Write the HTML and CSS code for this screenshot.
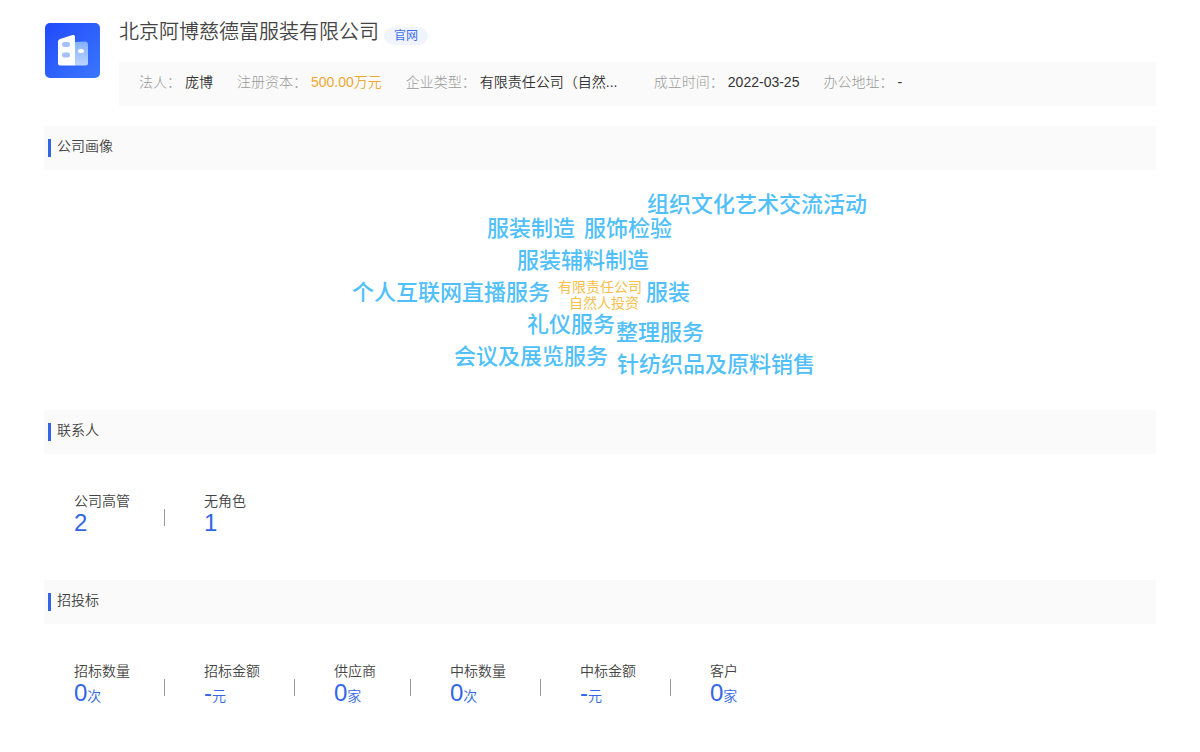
FILE: index.html
```html
<!DOCTYPE html>
<html lang="zh-CN">
<head>
<meta charset="utf-8">
<title>北京阿博慈德富服装有限公司</title>
<link rel="stylesheet" href="styles.css">
</head>
<body>
<main class="page">
  <header class="company">
    <svg class="logo" viewBox="0 0 55 55" aria-hidden="true">
      <defs>
        <linearGradient id="tile" x1="0" y1="0" x2="1" y2="1">
          <stop offset="0" stop-color="#2149fb"/>
          <stop offset="1" stop-color="#3a78fd"/>
        </linearGradient>
        <linearGradient id="wing" x1="0" y1="0" x2="0" y2="1">
          <stop offset="0" stop-color="#84b0fb"/>
          <stop offset="1" stop-color="#bad4fc"/>
        </linearGradient>
      </defs>
      <rect width="55" height="55" rx="5" fill="url(#tile)"/>
      <path d="M30 19 L40.500 18.500 Q43 19 43 21.500 V40 Q43 42.500 40.500 42.500 H30 Z" fill="url(#wing)"/>
      <path d="M15 16 Q13 16.500 13 19 V40.500 Q13 42.500 15 42.500 H30 V13.500 Q30 11.500 27.500 12 Z" fill="#fdfeff"/>
      <rect x="17" y="19" width="8" height="5" rx="2.500" fill="#a3c0f8"/>
      <rect x="17" y="29.500" width="8" height="5" rx="2.500" fill="#a3c0f8"/>
      <rect x="33" y="26" width="6" height="4" rx="2" fill="#fff"/>
    </svg>
    <div class="company-main">
      <div class="title-row">
        <h1 class="name">北京阿博慈德富服装有限公司</h1>
        <a class="site" href="#">官网</a>
      </div>
      <dl class="facts">
        <div class="fact"><dt>法人：</dt><dd>庞博</dd></div>
        <div class="fact"><dt>注册资本：</dt><dd class="money">500.00万元</dd></div>
        <div class="fact"><dt>企业类型：</dt><dd class="kind">有限责任公司（自然...</dd></div>
        <div class="fact"><dt>成立时间：</dt><dd>2022-03-25</dd></div>
        <div class="fact"><dt>办公地址：</dt><dd>-</dd></div>
      </dl>
    </div>
  </header>

  <section>
    <h2 class="heading">公司画像</h2>
    <div class="cloud">
      <span class="word w1">组织文化艺术交流活动</span>
      <span class="word w2">服装制造</span>
      <span class="word w3">服饰检验</span>
      <span class="word w4">服装辅料制造</span>
      <span class="word w5">个人互联网直播服务</span>
      <span class="word small w6">有限责任公司</span>
      <span class="word small w7">自然人投资</span>
      <span class="word w8">服装</span>
      <span class="word w9">礼仪服务</span>
      <span class="word w10">整理服务</span>
      <span class="word w11">会议及展览服务</span>
      <span class="word w12">针纺织品及原料销售</span>
    </div>
  </section>

  <section>
    <h2 class="heading">联系人</h2>
    <dl class="stats">
      <div class="stat"><dt>公司高管</dt><dd>2</dd></div>
      <div class="stat"><dt>无角色</dt><dd>1</dd></div>
    </dl>
  </section>

  <section>
    <h2 class="heading">招投标</h2>
    <dl class="stats">
      <div class="stat"><dt>招标数量</dt><dd>0<small>次</small></dd></div>
      <div class="stat"><dt>招标金额</dt><dd>-<small>元</small></dd></div>
      <div class="stat"><dt>供应商</dt><dd>0<small>家</small></dd></div>
      <div class="stat"><dt>中标数量</dt><dd>0<small>次</small></dd></div>
      <div class="stat"><dt>中标金额</dt><dd>-<small>元</small></dd></div>
      <div class="stat"><dt>客户</dt><dd>0<small>家</small></dd></div>
    </dl>
  </section>
</main>
</body>
</html>
```
FILE: styles.css
```css
* {
  box-sizing: border-box;
}

body {
  margin: 0;
  background: #fff;
  color: #444;
  font: 350 14px/20px "Liberation Sans", "Noto Sans CJK SC", sans-serif;
}

h1, h2, dl, dd {
  margin: 0;
  font-weight: 350;
}

.page {
  padding: 18px 44px 0;
}

.company {
  display: flex;
  gap: 19px;
  margin-bottom: 20px;
}

.logo {
  flex: none;
  width: 55px;
  height: 55px;
  margin: 5px 0 0 1px;
}

.company-main {
  flex: 1;
  min-width: 0;
}

.title-row {
  display: flex;
  align-items: flex-end;
  gap: 5px;
  height: 27px;
  margin-bottom: 17px;
}

.name {
  font-size: 20px;
  line-height: 26px;
}

.site {
  padding: 0 10px;
  border-radius: 9px;
  background: #eff4ff;
  color: #3d6ee8;
  font-size: 12px;
  font-weight: 400;
  line-height: 18px;
  text-decoration: none;
}

.facts {
  display: flex;
  gap: 24px;
  padding: 10px 20px 14px;
  background: #fafafa;
}

.fact {
  display: flex;
  gap: 4px;
  white-space: nowrap;
}

.fact dt {
  color: #999;
  font-weight: 300;
}

.fact dd {
  color: #333;
}

.fact .money {
  color: #f0a832;
}

.kind {
  width: 150px;
}

.heading {
  display: flex;
  align-items: center;
  gap: 6px;
  height: 44px;
  padding: 0 4px 4px;
  background: #fafafa;
  font-size: 14px;
}

.heading::before {
  content: "";
  width: 3px;
  height: 18px;
  margin-top: 4px;
  background: #3366e6;
}

.cloud {
  position: relative;
  width: 520px;
  height: 200px;
  margin: 20px auto;
}

.word {
  position: absolute;
  color: #50bffa;
  font-size: 22px;
  font-weight: 500;
  line-height: 30px;
  white-space: nowrap;
}

.small {
  color: #f7c04a;
  font-size: 14px;
  font-weight: 400;
  line-height: 16px;
}

.w1 { left: 307px; top: 0; }
.w2 { left: 147px; top: 24px; }
.w3 { left: 244px; top: 24px; }
.w4 { left: 177px; top: 56px; }
.w5 { left: 12px; top: 88px; }
.w6 { left: 218px; top: 89px; }
.w7 { left: 229px; top: 105px; }
.w8 { left: 306px; top: 88px; }
.w9 { left: 187px; top: 120px; }
.w10 { left: 276px; top: 128px; }
.w11 { left: 114px; top: 152px; }
.w12 { left: 277px; top: 160px; }

.stats {
  display: flex;
  height: 126px;
  padding: 37px 30px 0;
}

.stat {
  display: flex;
  flex-direction: column;
  position: relative;
  padding-right: 74px;
}

.stat:not(:last-child)::after {
  content: "";
  position: absolute;
  right: 39px;
  top: 18px;
  width: 1px;
  height: 17px;
  background: #999;
}

.stat dd {
  color: #3366e6;
  font-size: 24px;
  line-height: 24px;
}

.stat small {
  font-size: 14px;
}
```
